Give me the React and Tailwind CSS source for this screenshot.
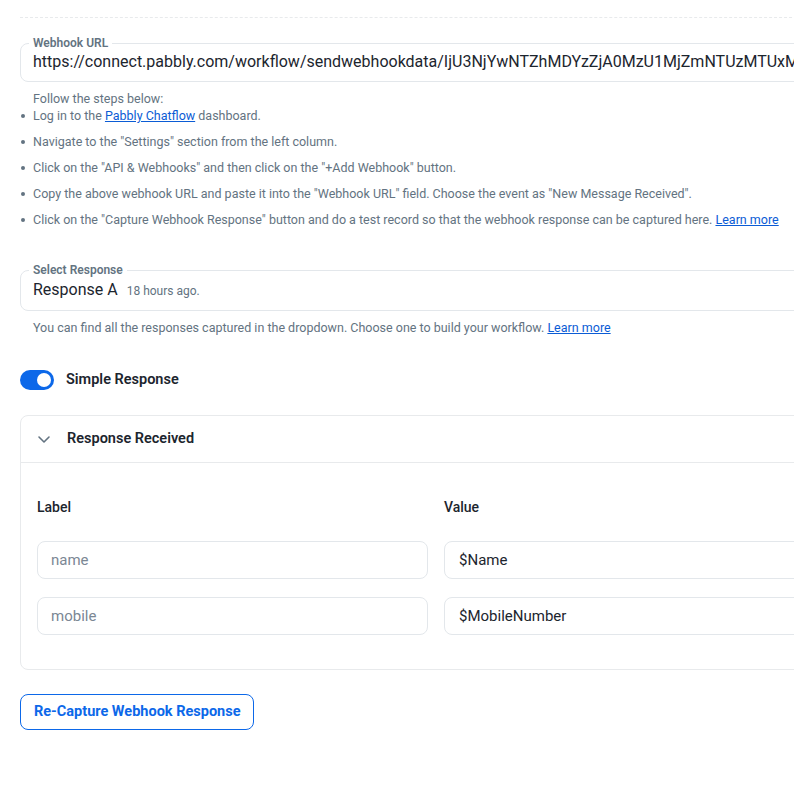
import React, { useState } from 'react';

const steps = [
  <>Log in to the <a href="#" className="text-[#0b5cd5] underline">Pabbly Chatflow</a> dashboard.</>,
  <>Navigate to the "Settings" section from the left column.</>,
  <>Click on the "API &amp; Webhooks" and then click on the "+Add Webhook" button.</>,
  <>Copy the above webhook URL and paste it into the "Webhook URL" field. Choose the event as "New Message Received".</>,
  <>
    Click on the "Capture Webhook Response" button and do a test record so that the webhook response can be captured here.{' '}
    <a href="#" className="text-[#0b5cd5] underline">Learn more</a>
  </>,
];

const rows = [
  { label: 'name', value: '$Name' },
  { label: 'mobile', value: '$MobileNumber' },
];

const Field = ({ legend, children }) => (
  <fieldset className="rounded-lg border border-[#e3e7eb] px-3 pb-2">
    <legend className="-ml-1 px-1 text-xs font-semibold leading-4 text-[#637381]">{legend}</legend>
    {children}
  </fieldset>
);

const App = () => {
  const [simple, setSimple] = useState(true);
  const [open, setOpen] = useState(true);

  return (
    <div className="w-[794px] overflow-hidden bg-white font-['Roboto',sans-serif] text-[#1c252e]">
      <div className="w-[872px] pl-5 pr-5">
        <div className="h-[18px] border-b border-dashed border-[#e8eaec]" />

        <div className="mt-[17px]">
          <Field legend="Webhook URL">
            <div className="whitespace-nowrap text-base leading-[22px] text-[#1c252e]">
              https://connect.pabbly.com/workflow/sendwebhookdata/IjU3NjYwNTZhMDYzZjA0MzU1MjZmNTUzMTUxMzli_pc
            </div>
          </Field>
        </div>

        <div className="mt-[9px] text-[12.5px] text-[#637381]">
          <p className="pl-[13px] leading-4">Follow the steps below:</p>
          <ul>
            {steps.map((s, i) => (
              <li key={i} className="mt-2 flex items-start leading-[18px] first:mt-0">
                <span className="ml-px mr-[8px] mt-[7px] h-1 w-1 shrink-0 rounded-full bg-[#637381]" />
                <span className="whitespace-nowrap">{s}</span>
              </li>
            ))}
          </ul>
        </div>

        <div className="mt-[33px]">
          <Field legend="Select Response">
            <div className="flex items-baseline gap-[9px] whitespace-nowrap leading-[22px]">
              <span className="text-base text-[#1c252e]">Response A</span>
              <span className="text-xs text-[#637381]">18 hours ago.</span>
            </div>
          </Field>
        </div>

        <p className="mt-[9px] pl-[13px] text-[12.5px] leading-4 text-[#637381]">
          You can find all the responses captured in the dropdown. Choose one to build your workflow.{' '}
          <a href="#" className="text-[#0b5cd5] underline">Learn more</a>
        </p>

        <div className="mt-[34px] flex items-center gap-3">
          <button
            type="button"
            onClick={() => setSimple(!simple)}
            className={`flex h-5 w-[34px] items-center rounded-full px-[3px] ${simple ? 'justify-end bg-[#0c68e9]' : 'justify-start bg-[#c4cdd5]'}`}
          >
            <span className="h-[14px] w-[14px] rounded-full bg-white" />
          </button>
          <span className="text-[14.5px] font-semibold leading-5 text-[#1c252e]">Simple Response</span>
        </div>

        <div className="mt-[25px] rounded-lg border border-[#e8eaec]">
          <button
            type="button"
            onClick={() => setOpen(!open)}
            className="flex h-[46px] w-full items-center px-4 text-left"
          >
            <svg width="14" height="14" viewBox="0 0 14 14" className={open ? '' : '-rotate-90'}>
              <path d="M2 5l5 5 5-5" fill="none" stroke="#637381" strokeWidth="1.6" strokeLinecap="round" strokeLinejoin="round" />
            </svg>
            <span className="ml-4 text-[14.5px] font-semibold text-[#1c252e]">Response Received</span>
          </button>

          {open && (
            <div className="border-t border-[#e8eaec] px-4 pb-[34px] pt-[34px]">
              <div className="grid grid-cols-2 gap-x-4">
                <div className="text-sm font-medium leading-5 text-[#1c252e]">Label</div>
                <div className="text-sm font-medium leading-5 text-[#1c252e]">Value</div>
              </div>
              <div className="mt-[24px] flex flex-col gap-[18px]">
                {rows.map((r) => (
                  <div key={r.label} className="grid grid-cols-2 gap-x-4">
                    <input
                      readOnly
                      placeholder={r.label}
                      className="h-[38px] rounded-lg border border-[#e3e7eb] px-[13px] text-[15px] text-[#1c252e] placeholder:text-[#7b8794] focus:outline-none"
                    />
                    <input
                      readOnly
                      value={r.value}
                      className="h-[38px] rounded-lg border border-[#e3e7eb] px-[14px] text-[15px] text-[#1c252e] focus:outline-none"
                    />
                  </div>
                ))}
              </div>
            </div>
          )}
        </div>

        <button
          type="button"
          className="mt-6 h-[36px] rounded-lg border border-[#0c68e9] px-[13px] text-[14.5px] font-bold text-[#0c68e9]"
        >
          Re-Capture Webhook Response
        </button>

        <div className="h-14" />
      </div>
    </div>
  );
};

export default App;
